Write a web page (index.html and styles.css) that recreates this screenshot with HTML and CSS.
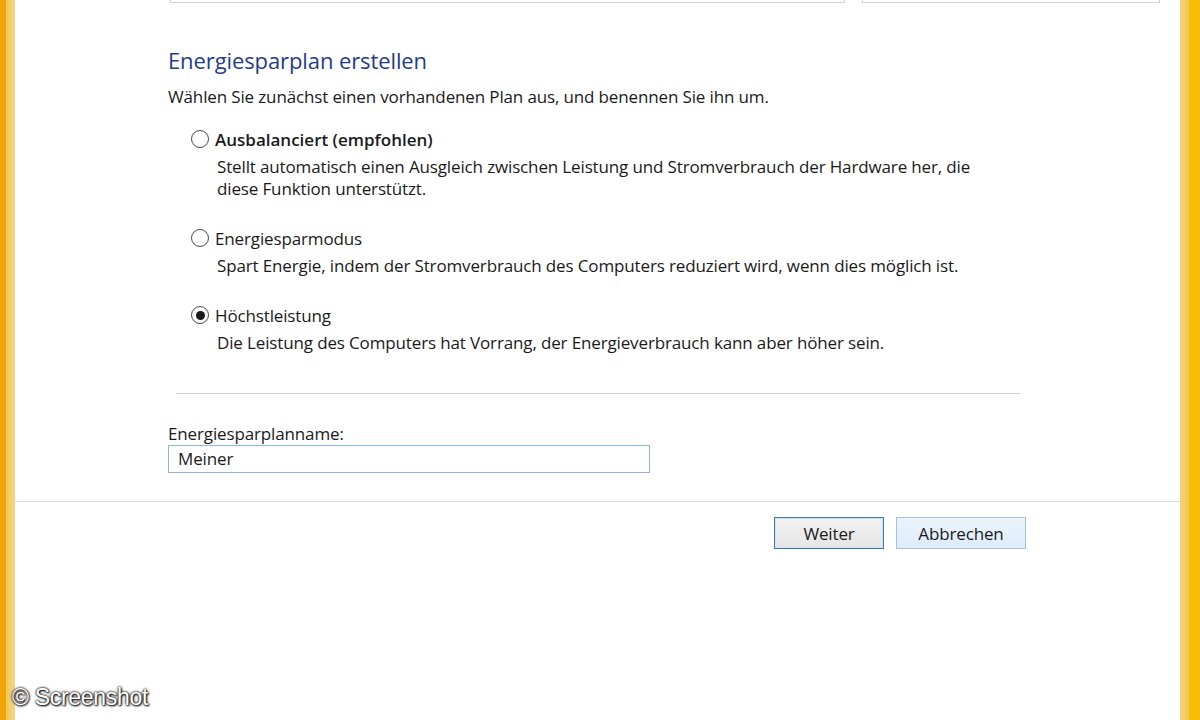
FILE: index.html
```html
<!DOCTYPE html>
<html lang="de">
<head>
<meta charset="utf-8">
<title>Energiesparplan erstellen</title>
<link rel="stylesheet" href="styles.css">
</head>
<body>
<div class="frame">
  <div class="edge-left"><div class="e-dark"></div><div class="e-light"></div></div>
  <div class="window">
    <div class="topbar">
      <div class="addr"></div>
      <div class="search"></div>
    </div>
    <div class="content">
      <h1 class="title">Energiesparplan erstellen</h1>
      <p class="intro">Wählen Sie zunächst einen vorhandenen Plan aus, und benennen Sie ihn um.</p>
      <div class="option">
        <div class="opt-head"><span class="radio"></span><span class="opt-label bold">Ausbalanciert (empfohlen)</span></div>
        <p class="opt-desc">Stellt automatisch einen Ausgleich zwischen Leistung und Stromverbrauch der Hardware her, die<br>diese Funktion unterstützt.</p>
      </div>
      <div class="option">
        <div class="opt-head"><span class="radio"></span><span class="opt-label">Energiesparmodus</span></div>
        <p class="opt-desc">Spart Energie, indem der Stromverbrauch des Computers reduziert wird, wenn dies möglich ist.</p>
      </div>
      <div class="option">
        <div class="opt-head"><span class="radio checked"></span><span class="opt-label">Höchstleistung</span></div>
        <p class="opt-desc">Die Leistung des Computers hat Vorrang, der Energieverbrauch kann aber höher sein.</p>
      </div>
      <div class="sep"></div>
      <div class="name-label">Energiesparplanname:</div>
      <div class="name-input">Meiner</div>
    </div>
    <div class="footer">
      <button class="btn btn-default">Weiter</button>
      <button class="btn btn-cancel">Abbrechen</button>
    </div>
  </div>
  <div class="edge-right"><div class="e-light2"></div><div class="e-dark2"></div></div>
</div>
<div class="watermark">© Screenshot</div>
</body>
</html>
```

FILE: styles.css
```css
html, body {
  margin: 0;
  padding: 0;
  background: #ffffff;
}
body {
  width: 1200px;
  height: 720px;
  overflow: hidden;
  position: relative;
  font-family: "Open Sans", "Noto Sans", sans-serif;
  color: #1a1a1a;
}
.frame {
  display: flex;
  height: 720px;
}
.edge-left, .edge-right {
  display: flex;
  height: 100%;
}
.e-dark { width: 6px; background: #f0a405; }
.e-light { width: 9px; background: linear-gradient(90deg, #f3c85a, #f6d680); }
.e-light2 { width: 9px; background: linear-gradient(90deg, #f4d47c, #efc656); }
.e-dark2 { width: 11px; background: #f7bb08; }
.window {
  flex: 1;
  display: flex;
  flex-direction: column;
  background: #fff;
}
.topbar {
  display: flex;
  height: 3px;
  padding-left: 155px;
  gap: 17px;
}
.addr {
  width: 673px;
  border: 1px solid #d4d4d4;
  border-top: none;
}
.search {
  width: 296px;
  border: 1px solid #d4d4d4;
  border-top: none;
}
.content {
  padding-left: 153px;
  height: 498px;
  border-bottom: 1px solid #dcdcdc;
}
.title {
  margin: 42px 0 0 0;
  font-weight: normal;
  font-size: 22px;
  line-height: 30px;
  color: #1f3d8a;
  letter-spacing: -0.1px;
}
.intro {
  margin: 11px 0 0 0;
  font-size: 17px;
  line-height: 22px;
  letter-spacing: -0.14px;
}
.option {
  margin-top: 20px;
  padding-left: 23px;
}
.option + .option { margin-top: 27px; }
.opt-head {
  display: flex;
  align-items: center;
  gap: 6px;
  height: 22px;
}
.radio {
  width: 18px;
  height: 18px;
  border: 1px solid #4d4d4d;
  border-radius: 50%;
  background: radial-gradient(circle, #ffffff 55%, #e8e8e8 100%);
  box-sizing: border-box;
  display: flex;
  align-items: center;
  justify-content: center;
}
.radio.checked::after {
  content: "";
  width: 9px;
  height: 9px;
  border-radius: 50%;
  background: #1a1a1a;
}
.opt-label {
  font-size: 17px;
  letter-spacing: -0.14px;
}
.opt-label.bold { font-weight: 600; letter-spacing: 0; }
.opt-desc {
  margin: 6px 0 0 26px;
  font-size: 17px;
  line-height: 22px;
  letter-spacing: -0.14px;
}
.sep {
  margin: 39px 0 0 8px;
  width: 844px;
  height: 1px;
  background: #cfcfcf;
}
.name-label {
  margin-top: 29px;
  font-size: 17px;
  line-height: 22px;
  letter-spacing: -0.14px;
}
.name-input {
  width: 482px;
  height: 28px;
  box-sizing: border-box;
  border: 1px solid #8cb6de;
  padding: 0 9px;
  font-size: 17px;
  line-height: 26px;
  letter-spacing: -0.14px;
}
.footer {
  display: flex;
  gap: 12px;
  padding: 15px 0 0 759px;
}
.btn {
  height: 32px;
  font-family: "Open Sans", "Noto Sans", sans-serif;
  font-size: 17px;
  letter-spacing: -0.14px;
  color: #1a1a1a;
  padding: 0;
  box-sizing: border-box;
}
.btn-default {
  width: 110px;
  border: 1px solid #3d7bad;
  background: linear-gradient(#f2f2f2, #e5e5e5);
  box-shadow: inset 0 0 0 1px #cfe3f4;
}
.btn-cancel {
  width: 130px;
  border: 1px solid #a9c0d6;
  background: linear-gradient(#ecf4fc, #dcecfc);
}
.watermark {
  position: absolute;
  left: 12px;
  top: 684px;
  font-family: "Liberation Sans", Arial, sans-serif;
  font-size: 23px;
  color: #ffffff;
  letter-spacing: -0.3px;
  text-shadow: 0 0 2px #000, 0 0 3px #333, 1px 1px 2px #000;
}
```
